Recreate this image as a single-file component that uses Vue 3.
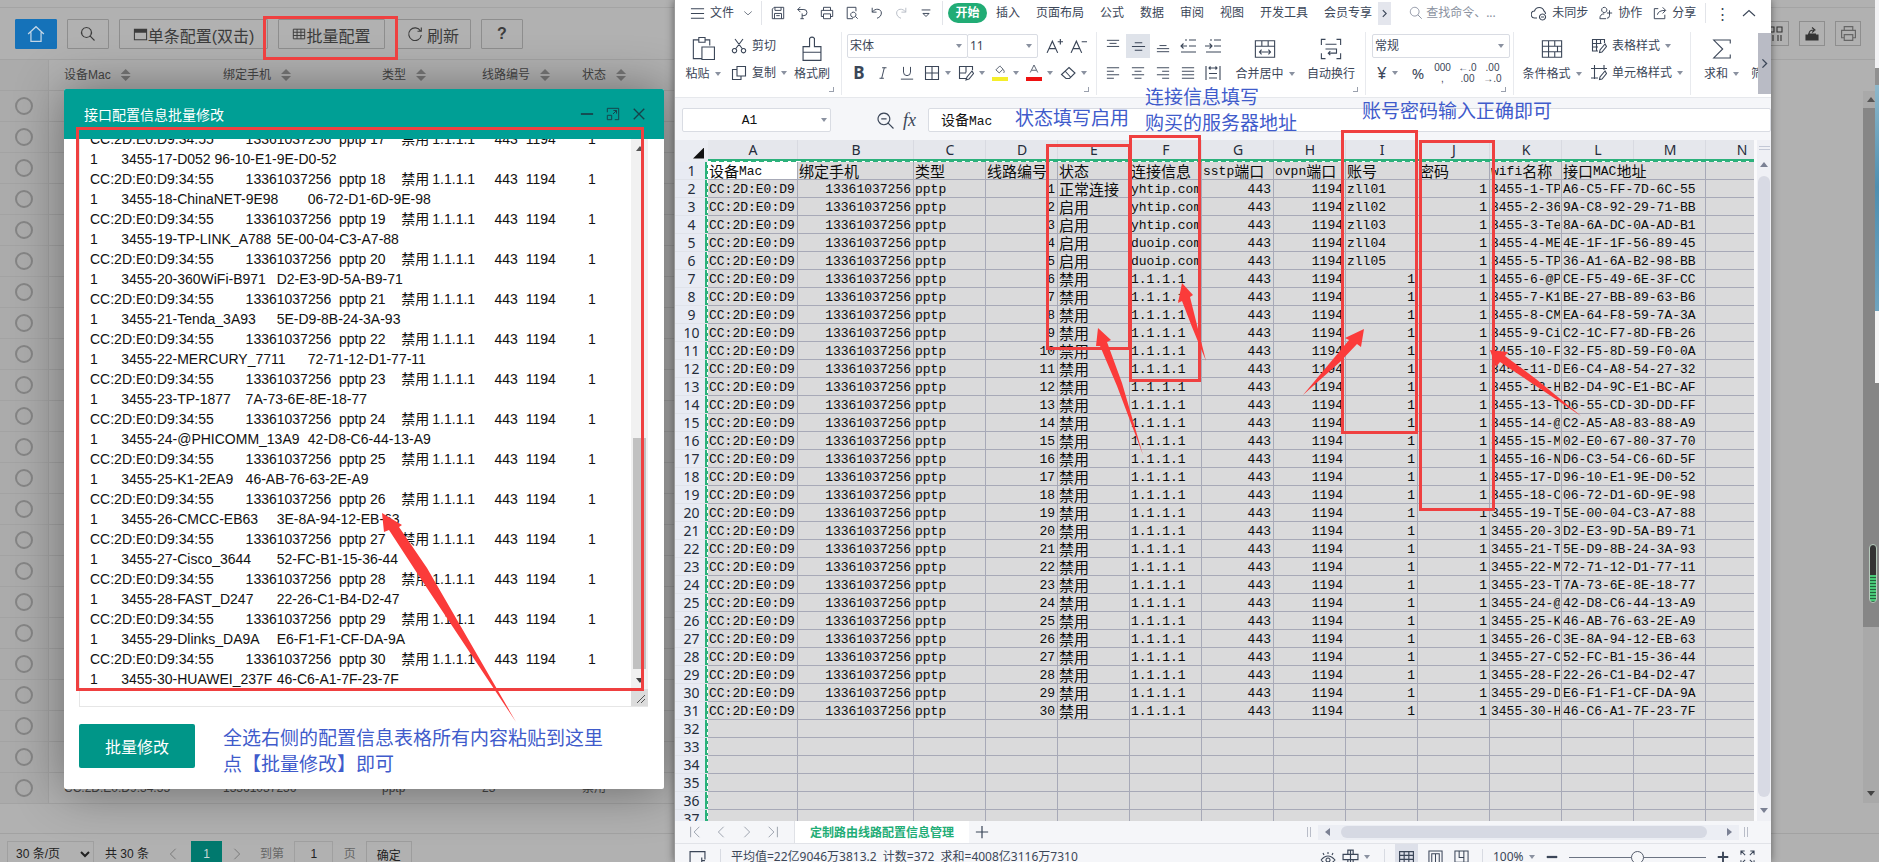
<script setup>
import { h } from 'vue'

const paths = {
  home: 'M1 8 8 1.5 15 8M3.5 6.5V14.5H12.5V6.5',
  search: 'M6.5 1.5a5 5 0 1 0 .01 0M10.2 10.2 14.5 14.5',
  table: 'M1.5 2.5h13v11h-13zM1.5 6h13M1.5 9.7h13M5.8 2.5v11M10.2 2.5v11',
  windowTop: 'M1.5 2.5h13v11h-13zM1.5 3.5h13M1.5 4.5h13M1.5 5.5h13',
  refresh: 'M13.5 5A6.3 6.3 0 1 0 14.3 9M14.3 1.5V5.3H10.5',
  minus: 'M1 8H15',
  maxi: 'M1.5 6V1.5h13v13H10M1.5 9.5h5v5h-5zM8 8l4-4M8.5 4H12V7.5',
  close: 'M2 2 14 14M14 2 2 14',
  burger: 'M1 3H15M1 8H15M1 13H15',
  down: 'M2 5.5 8 11 14 5.5',
  up: 'M2 11 8 5.5 14 11',
  left: 'M11 2 5 8 11 14',
  right: 'M5 2 11 8 5 14',
  first: 'M3 2V14M13 2 7 8 13 14',
  last: 'M13 2V14M3 2 9 8 3 14',
  save: 'M1.5 3.5l2-2h11v13h-13zM4.5 1.5v3.5h7V1.5M4 14.5V8.5h8v6M6 11h4',
  redoArrow: 'M2 4h7a3.5 3.5 0 0 1 0 7H7M5 1 2 4l3 3M7 8.5v6M5 14.5h4',
  print: 'M4 5V1.5h8V5M4 12H1.5V5h13v7H12M4 9h8v5.5H4z',
  preview: 'M9 14.5H2.5V1.5h10V6M9.5 7a3 3 0 1 0 .01 0M12 12l2.5 2.5',
  undo: 'M2.5 2v5h5M2.5 7C6 2 13 3 13 8c0 3-2 5-5 6',
  redo: 'M13.5 2v5h-5M13.5 7C10 2 3 3 3 8c0 3 2 5 5 6',
  moreDown: 'M3 4.5H13M4.5 8.5H11.5L8 12z',
  paste: 'M5 2.5H1.5v12H7M5 1h4v3H5zM9 2.5h3V6M7 7h8v8H7z',
  cut: 'M4 1 11.5 11M12 1 4.5 11M3.5 10.5a2.2 2.2 0 1 0 .01 0M12.5 10.5a2.2 2.2 0 1 0 .01 0',
  copy: 'M6 1.5h8.5v9.5H6zM6 4.5H1.5v10H10V11',
  brush: 'M6.5 6.5V1.5Q8 0 9.5 1.5V6.5H13.5V10H2.5V6.5zM2.5 10v5h11v-5',
  aPlus: 'M1 14 6 3 11 14M3 10H9M11 3.5H16M13.5 1V6',
  aMinus: 'M1 14 6 3 11 14M3 10H9M11 3.5H16',
  italic: 'M7 2H12M4 14H9M9.5 2 6.5 14',
  underline: 'M4 1V7a4 4 0 0 0 8 0V1M1 15H15',
  border: 'M1.5 1.5h13v13h-13zM8 1.5v13M1.5 8h13',
  drawBorder: 'M8 13.5H1.5V1.5h13V5M8 1.5v6M1.5 8H8M14 6l-5 6-1 3 3-1 4.5-5.5z',
  fill: 'M8 1 2.5 6.5 7 10.5 12 5.5 8 1.5M12.5 6q2 3 .5 4.5',
  fontA: 'M3 10 8 0 13 10M5 7H11',
  eraser: 'M9 2.5 15 8 9.5 13.5H6L1.5 9.5zM5 6l5.5 6',
  vTop: 'M1 1.5H15M4 5H12M1 8.5H15',
  vMid: 'M4 4H12M1 8H15M4 12H12',
  vBot: 'M4 7.5H12M1 11H15M1 14.5H15',
  outdent: 'M9 2H16M9 8H16M1 14H16M1 8H7M3.5 5.5 1 8l2.5 2.5M5 2H7',
  indent: 'M9 2H16M9 8H16M1 14H16M0 8H7M4.5 5.5 7 8 4.5 10.5M5 2H7',
  hLeft: 'M1 2H15M1 6H9M1 10H15M1 14H9',
  hCenter: 'M1 2H15M4 6H12M1 10H15M4 14H12',
  hRight: 'M1 2H15M7 6H15M1 10H15M7 14H15',
  hJust: 'M1 2H15M1 6H15M1 10H15M1 14H15',
  hDist: 'M1 1V15M15 1V15M4 3H12M5.5 1.5 4 3l1.5 1.5M10.5 1.5 12 3l-1.5 1.5M4 8.5H12M4 13H12',
  merge: 'M1 2h14v12H1zM1 6h14M5.7 2v4M10.3 2v4M4 10.2H12M5.5 8.5 4 10.2l1.5 1.7M10.5 8.5 12 10.2l-1.5 1.7',
  wrap: 'M4 1H1V5M12 1h3V5M4 15H1V11M12 15h3V11M4 4.5H12M4 8H12V11H6M7.5 9.5 6 11l1.5 1.5',
  condition: 'M1 2h14v12H1zM1 6h14M1 10h14M5.5 2v12M10 2v4M10 10v4M12 6v4',
  tableStyle: 'M7 13H1.5V1.5h12V5M1.5 5.5h9M1.5 9H7M5.5 1.5V13M9.5 1.5V6M14 6l-5 6-.5 2.5 2.5-.5 4.5-5.5z',
  cellStyle: 'M0 3.5H16M3.5 0V14M13 0V5M0 13H7M14 6l-5 6-.5 2.5 2.5-.5 4.5-5.5z',
  sigma: 'M14 4V1.5H2L8.5 8 2 14.5H14V12',
  cloud: 'M6 13H4a3.5 3.5 0 0 1-.5-7A5 5 0 0 1 13 6a3.5 3.5 0 0 1 1.5 3M11.5 9a3 3 0 1 0 .01 0M10 12h3',
  people: 'M6 1.5a3 3 0 1 0 .01 0M1 14.5Q1 9 6 9M1 14.5H8M12 5V11M9 8H15M12 11q0 3-3 3',
  share: 'M6 3H1.5v11.5h12V10M5 10q1-5 9-5M11 1.5 14.5 5 11 8.5',
  zoomOut: 'M6.5 1a5.5 5.5 0 1 0 .01 0M4 6.5H9M10.5 10.5 15.5 15.5',
  plus: 'M8 1V15M1 8H15',
  status: 'M8 12H1V1.5H15V9M12 7v6M10 14h5M12 10h3',
  eye: 'M1 9q7-8 14 0q-7 8-14 0M8 7a2 2 0 1 0 .01 0M8 1V3M3 2l1 2M13 2l-1 2',
  target: 'M8 1V15M1 5h14v5H1zM5.5 5V1h5v4M5.5 10v4h5v-4',
  pageView: 'M1 15V1h14v14M4 15V4h8v11M8 4V15',
  breakView: 'M1 1h14v12H1zM5.5 1v7H10.5V1M10.5 8V13',
  expand: 'M1 5V1h4M1 1l4.5 4.5M11 1h4v4M15 1l-4.5 4.5M1 11v4h4M1 15l4.5-4.5M15 11v4h-4M15 15l-4.5-4.5',
  columns: 'M1 1h5v5H1zM9 1h5v5H9zM2 9v6M5 9v6M10 9v6M13 9v6',
  exportBox: 'M2 9h12v5H2zM2 10h12M2 11h12M2 12h12M2 13h12M5 8q0-4 5-4M8 1.5 11 4 8 6.5M4 8h8'
}
const Icon = (p) =>
  h('svg', { viewBox: '0 0 16 16', width: p.s || 16, height: p.s || 16, fill: 'none', stroke: 'currentColor', 'stroke-width': p.w || 1.1, 'aria-hidden': 'true' }, [
    h('path', { d: paths[p.n] })
  ])
Icon.props = ['n', 's', 'w']

const tail = [
  ['D052', '96-10-E1-9E-D0-52'], ['ChinaNET-9E98', '06-72-D1-6D-9E-98'], ['TP-LINK_A788', '5E-00-04-C3-A7-88'],
  ['360WiFi-B971', 'D2-E3-9D-5A-B9-71'], ['Tenda_3A93', '5E-D9-8B-24-3A-93'], ['MERCURY_7711', '72-71-12-D1-77-11'],
  ['TP-1877', '7A-73-6E-8E-18-77'], ['@PHICOMM_13A9', '42-D8-C6-44-13-A9'], ['K1-2EA9', '46-AB-76-63-2E-A9'],
  ['CMCC-EB63', '3E-8A-94-12-EB-63'], ['Cisco_3644', '52-FC-B1-15-36-44'], ['FAST_D247', '22-26-C1-B4-D2-47'],
  ['Dlinks_DA9A', 'E6-F1-F1-CF-DA-9A'], ['HUAWEI_237F', '46-C6-A1-7F-23-7F']
]
const head = [
  ['TP', 'A6-C5-FF-7D-6C-55'], ['36', '9A-C8-92-29-71-BB'], ['Te', '8A-6A-DC-0A-AD-B1'], ['ME', '4E-1F-1F-56-89-45'],
  ['TP', '36-A1-6A-B2-98-BB'], ['@P', 'CE-F5-49-6E-3F-CC'], ['K1', 'BE-27-BB-89-63-B6'], ['CM', 'EA-64-F8-59-7A-3A'],
  ['Ci', 'C2-1C-F7-8D-FB-26'], ['F', '32-F5-8D-59-F0-0A'], ['D', 'E6-C4-A8-54-27-32'], ['H', 'B2-D4-9C-E1-BC-AF'],
  ['T', 'D6-55-CD-3D-DD-FF'], ['@', 'C2-A5-A8-83-88-A9'], ['M', '02-E0-67-80-37-70'], ['N', 'D6-C3-54-C6-6D-5F']
]
const all = [...head, ...tail]
const areaText = tail
  .map(([name, mac], i) => `CC:2D:E0:D9:34:55\t13361037256\tpptp\t${i + 17}\t禁用\t1.1.1.1\t443\t1194\t1\n1\t3455-${i + 17}-${name}\t${mac}`)
  .join('\n')

const letters = 'ABCDEFGHIJKLMN'.split('')
const right = [1, 3, 6, 7, 8, 9]
const sheet = [['设备Mac', '绑定手机', '类型', '线路编号', '状态', '连接信息', 'sstp端口', 'ovpn端口', '账号', '密码', 'wifi名称', '接口MAC地址']]
all.forEach(([name, mac], i) => {
  const n = i + 1
  sheet.push([
    'CC:2D:E0:D9', '13361037256', 'pptp', String(n), n === 1 ? '正常连接' : n < 6 ? '启用' : '禁用',
    n < 4 ? 'yhtip.com' : n < 6 ? 'duoip.com' : '1.1.1.1', '443', '1194', n < 6 ? 'zll0' + n : '1', '1',
    `3455-${n}-${name}`.slice(0, 9), mac
  ])
})
const isRight = (r, c, v) => r > 0 && right.includes(c) && !v.startsWith('zll')
const runs = (v) => v.match(/[\x00-\x7f]+|[^\x00-\x7f]+/g).map((t) => ({ t, latin: t.charCodeAt(0) < 128 }))

const tabs = ['插入', '页面布局', '公式', '数据', '审阅', '视图', '开发工具', '会员专享']
const heads = ['设备Mac', '绑定手机', '类型', '线路编号', '状态']
const lastRow = ['CC:2D:E0:D9:34:55', '13361037256', 'pptp', '23', '禁用']
const quick = [['save', '保存'], ['redoArrow', '输出'], ['print', '打印'], ['preview', '打印预览'], ['undo', '撤销'], ['redo', '恢复'], ['moreDown', '更多']]
</script>

<template>
  <div class="desktop">
    <section class="admin">
      <div class="strip"></div>
      <div class="tools">
        <button class="tb home" aria-label="首页"><Icon n="home" s="18" /></button>
        <button class="tb" aria-label="搜索"><Icon n="search" /></button>
        <button class="tb wide"><Icon n="windowTop" s="15" /><span>单条配置(双击)</span></button>
        <button class="tb batch"><Icon n="table" s="14" /><span>批量配置</span></button>
        <button class="tb reload"><Icon n="refresh" /><span>刷新</span></button>
        <button class="tb q">?</button>
        <div class="tools-right">
          <button aria-label="筛选列"><Icon n="columns" /></button>
          <button aria-label="导出"><Icon n="exportBox" /></button>
          <button class="pr" aria-label="打印"><Icon n="print" s="17" /></button>
        </div>
      </div>
      <div class="main">
        <table class="list">
          <colgroup><col class="w0" /><col class="w1" /><col class="w2" /><col class="w3" /><col class="w4" /><col class="w5" /></colgroup>
          <thead>
            <tr><th></th><th v-for="t in heads" :key="t">{{ t }}<i class="sort"></i></th></tr>
          </thead>
          <tbody>
            <tr v-for="n in 23" :key="n">
              <td class="pick"><input type="radio" name="line" :aria-label="'选择第' + n + '行'" /></td>
              <template v-if="n === 23"><td v-for="t in lastRow" :key="t">{{ t }}</td></template>
              <td v-else colspan="5"></td>
            </tr>
          </tbody>
        </table>
        <div class="page-scroll"><i class="tri up"></i><div class="page-thumb"></div><i class="tri dn"></i></div>
      </div>
      <div class="spacer"></div>
      <div class="pager">
        <select aria-label="每页条数"><option>30 条/页</option></select>
        <span class="total">共 30 条</span>
        <button class="pg" aria-label="上一页"><Icon n="left" s="14" /></button>
        <button class="cur">1</button>
        <button class="pg" aria-label="下一页"><Icon n="right" s="14" /></button>
        <label class="goto">到第 <input type="text" value="1" /> 页</label>
        <button class="ok">确定</button>
      </div>
    </section>

    <section class="modal">
      <header>
        <h1>接口配置信息批量修改</h1>
        <button aria-label="最小化"><Icon n="minus" w="2" s="14" /></button>
        <button aria-label="最大化"><Icon n="maxi" s="14" /></button>
        <button aria-label="关闭"><Icon n="close" w="1.6" s="14" /></button>
      </header>
      <div class="mbody">
        <div class="area">
          <textarea :value="areaText" aria-label="配置信息" wrap="off" spellcheck="false"></textarea>
          <div class="ascroll">
            <i class="tri up"></i><div class="athumb"></div><i class="tri dn"></i>
            <svg class="grip" viewBox="0 0 17 17"><path d="M6 14 14 6M10 14l4-4" /></svg>
          </div>
        </div>
        <div class="mfoot">
          <button>批量修改</button>
          <p class="note">全选右侧的配置信息表格所有内容粘贴到这里<br />点【批量修改】即可</p>
        </div>
      </div>
    </section>

    <section class="wps">
      <nav class="menu">
        <button class="file"><Icon n="burger" s="15" /><span>文件</span><Icon n="down" s="10" /></button>
        <div class="quick"><button v-for="q in quick" :key="q[0]" :aria-label="q[1]" :class="q[0]"><Icon :n="q[0]" s="14" /></button></div>
        <button class="start">开始</button>
        <div class="tabs"><button v-for="t in tabs" :key="t">{{ t }}</button></div>
        <button class="more" aria-label="更多选项卡"><Icon n="right" s="9" w="2" /></button>
        <label class="find"><Icon n="search" s="14" /><input type="text" placeholder="查找命令、..." aria-label="查找命令" /></label>
        <button class="act a1"><Icon n="cloud" />未同步</button>
        <button class="act a2"><Icon n="people" s="14" />协作</button>
        <button class="act a3"><Icon n="share" s="14" />分享</button>
        <button class="dots" aria-label="更多">⋮</button>
        <button class="fold" aria-label="折叠功能区"><Icon n="up" /></button>
      </nav>

      <div class="ribbon">
        <div class="group g1">
          <button class="big paste"><Icon n="paste" s="25" w=".7" /><span>粘贴<i class="caret"></i></span></button>
          <div class="rows">
            <button class="sm"><Icon n="cut" />剪切</button>
            <button class="sm"><Icon n="copy" />复制<i class="caret"></i></button>
          </div>
          <button class="big fmt"><Icon n="brush" s="26" w=".7" /><span>格式刷</span></button>
          <i class="corner"></i>
        </div>
        <div class="group g2">
          <div class="rows">
            <div class="line">
              <div class="combo font"><select aria-label="字体"><option>宋体</option></select><i class="caret"></i></div>
              <div class="combo size"><select aria-label="字号"><option>11</option></select><i class="caret"></i></div>
              <button class="ib a" aria-label="增大字号"><Icon n="aPlus" s="17" /></button>
              <button class="ib" aria-label="减小字号"><Icon n="aMinus" s="17" /></button>
            </div>
            <div class="line second">
              <button class="ib bold">B</button>
              <button class="ib" aria-label="斜体"><Icon n="italic" s="14" /></button>
              <button class="ib ul" aria-label="下划线"><Icon n="underline" s="14" /></button>
              <button class="dd" aria-label="边框"><Icon n="border" /><i class="caret"></i></button>
              <button class="dd" aria-label="绘制边框"><Icon n="drawBorder" /><i class="caret"></i></button>
              <button class="dd yellow" aria-label="填充颜色"><Icon n="fill" /><i class="caret"></i></button>
              <button class="dd red" aria-label="字体颜色"><Icon n="fontA" /><i class="caret"></i></button>
              <button class="dd" aria-label="清除"><Icon n="eraser" /><i class="caret"></i></button>
            </div>
          </div>
          <i class="corner"></i>
        </div>
        <div class="group g3">
          <div class="rows">
            <div class="line al">
              <button class="ib" aria-label="顶端对齐"><Icon n="vTop" s="14" /></button>
              <button class="ib on" aria-label="垂直居中"><Icon n="vMid" s="15" /></button>
              <button class="ib" aria-label="底端对齐"><Icon n="vBot" s="14" /></button>
              <button class="ib" aria-label="减少缩进"><Icon n="outdent" /></button>
              <button class="ib" aria-label="增加缩进"><Icon n="indent" /></button>
            </div>
            <div class="line al second">
              <button class="ib" aria-label="左对齐"><Icon n="hLeft" s="14" /></button>
              <button class="ib" aria-label="水平居中"><Icon n="hCenter" s="14" /></button>
              <button class="ib" aria-label="右对齐"><Icon n="hRight" s="14" /></button>
              <button class="ib" aria-label="两端对齐"><Icon n="hJust" s="14" /></button>
              <button class="ib" aria-label="分散对齐"><Icon n="hDist" /></button>
            </div>
          </div>
          <button class="big mg"><Icon n="merge" s="22" w=".8" /><span>合并居中<i class="caret"></i></span></button>
          <button class="big wr"><Icon n="wrap" s="22" w=".8" /><span>自动换行</span></button>
          <i class="corner"></i>
        </div>
        <div class="group g4">
          <div class="rows">
            <div class="combo num"><select aria-label="数字格式"><option>常规</option></select><i class="caret"></i></div>
            <div class="line second">
              <button class="dd yen">¥<i class="caret"></i></button>
              <button class="ib pct">%</button>
              <button class="ib tiny"><span>000</span><span>,</span></button>
              <button class="ib tiny"><span>←.0</span><span>.00</span></button>
              <button class="ib tiny"><span>.00</span><span>→.0</span></button>
            </div>
          </div>
          <i class="corner"></i>
        </div>
        <div class="group g5">
          <button class="big cd"><Icon n="condition" s="22" w=".8" /><span>条件格式<i class="caret"></i></span></button>
          <div class="rows">
            <button class="sm"><Icon n="tableStyle" />表格样式<i class="caret"></i></button>
            <button class="sm"><Icon n="cellStyle" />单元格样式<i class="caret"></i></button>
          </div>
        </div>
        <div class="group g6">
          <button class="big"><Icon n="sigma" s="22" w=".8" /><span>求和<i class="caret"></i></span></button>
          <button class="big cutoff"><span>筛</span></button>
        </div>
        <button class="slide" aria-label="向右滚动"><Icon n="right" s="11" w="2" /></button>
      </div>

      <div class="formula">
        <div class="namebox"><input type="text" value="A1" aria-label="名称框" /><i class="caret"></i></div>
        <button aria-label="缩小" class="zo"><Icon n="zoomOut" s="17" w="1.1" /></button>
        <em>fx</em>
        <div class="fbar" role="textbox" aria-label="编辑栏">设备<span class="lat">Mac</span></div>
      </div>

      <div class="grid">
        <div class="cells">
          <table>
            <colgroup><col class="rh" /><col class="ca" /><col class="cb" /><col v-for="n in 12" :key="n" class="cn" /></colgroup>
            <thead>
              <tr><th class="all"><i></i></th><th v-for="l in letters" :key="l">{{ l }}</th></tr>
            </thead>
            <tbody>
              <tr v-for="r in 37" :key="r">
                <th>{{ r }}</th>
                <template v-if="r <= 31">
                  <td v-for="(v, c) in sheet[r - 1]" :key="c" :colspan="c === 11 ? 2 : 1" :class="{ r: isRight(r - 1, c, v), active: r === 1 && c === 0 }">
                    <div><span v-for="(p, k) in runs(v)" :key="k" :class="{ lat: p.latin }">{{ p.t }}</span></div>
                  </td>
                  <td></td>
                </template>
                <template v-else><td v-for="l in letters" :key="l"></td></template>
              </tr>
            </tbody>
          </table>
        </div>
        <div class="vscroll"><i class="split"></i><i class="tri up"></i><div class="vthumb"></div><i class="tri dn"></i></div>
      </div>

      <div class="sheets">
        <button v-for="n in ['first', 'left', 'right', 'last']" :key="n" class="nav" :aria-label="n"><Icon :n="n" s="14" /></button>
        <button class="tab">定制路由线路配置信息管理</button>
        <button class="add" aria-label="新建工作表"><Icon n="plus" s="14" w="1.4" /></button>
        <i class="bars"></i>
        <div class="hscroll"><i class="tri lf"></i><div class="hthumb"></div><i class="tri rt"></i></div>
        <i class="bars"></i>
      </div>

      <footer class="status">
        <Icon n="status" s="17" />
        <i class="vr"></i>
        <span class="stat">平均值=22亿9046万3813.2&nbsp; 计数=372&nbsp; 求和=4008亿3116万7310</span>
        <button class="eye" aria-label="护眼模式"><Icon n="eye" /></button>
        <button class="tg" aria-label="阅读模式"><Icon n="target" s="17" /><i class="caret"></i></button>
        <i class="vr"></i>
        <button class="view on" aria-label="普通视图"><Icon n="table" s="17" /></button>
        <button class="view" aria-label="页面布局"><Icon n="pageView" s="15" /></button>
        <button class="view" aria-label="分页预览"><Icon n="breakView" s="15" /></button>
        <i class="vr v2"></i>
        <span class="pc">100%<i class="caret"></i></span>
        <button class="zb" aria-label="缩小"><Icon n="minus" s="12" w="3" /></button>
        <input class="zoom" type="range" min="0" max="100" value="50" aria-label="缩放" />
        <button class="zb" aria-label="放大"><Icon n="plus" s="12" w="2.5" /></button>
        <button class="full" aria-label="全屏"><Icon n="expand" s="15" /></button>
      </footer>
    </section>

    <div class="edge"><i class="e1"></i><i class="e2"></i><i class="e3"></i></div>
    <div class="meter"></div>

    <svg class="marks" aria-hidden="true">
      <g fill="none" stroke="#ef4040" stroke-width="3">
        <rect x="264.5" y="17.5" width="132" height="41" />
        <rect x="77.5" y="128.5" width="565" height="561" />
        <rect x="1047.5" y="145.5" width="82" height="203" />
        <rect x="1130.5" y="136.5" width="69" height="244" />
        <rect x="1342.5" y="131.5" width="74" height="301" />
        <rect x="1420.5" y="141.5" width="73" height="368" />
      </g>
      <g fill="#fb3b3a">
        <path d="M382 513 402 525 399 527 427 568 516 722 417 573 389 530 384 532z" />
        <path d="M1098 328 1111 340 1107 342 1122 383 1143 455 1117 386 1100 346 1096 346z" />
        <path d="M1182 283 1193 295 1190 297 1197 325 1206 361 1192 327 1182 301 1178 303z" />
        <path d="M1364 329 1361 347 1357 344 1340 362 1303 395 1334 358 1349 340 1345 338z" />
        <path d="M1490 350 1508 352 1505 356 1536 379 1581 416 1533 384 1500 362 1496 367z" />
      </g>
    </svg>
    <p class="note n1">状态填写启用</p>
    <p class="note n2">连接信息填写<br />购买的服务器地址</p>
    <p class="note n3">账号密码输入正确即可</p>
  </div>
</template>

<style>
html, body { margin: 0; overflow: hidden; }
</style>

<style scoped>
.desktop { position: relative; height: 100vh; overflow: hidden; background: #b1b1b1; font: 12px "Liberation Sans", "Noto Sans CJK SC", sans-serif; color: #333; }
.desktop *, .desktop { box-sizing: border-box; }
button { font: inherit; color: inherit; background: none; border: 0; padding: 0; margin: 0; display: flex; align-items: center; justify-content: center; flex: none; white-space: nowrap; }
input, select, textarea { font: inherit; color: inherit; margin: 0; border: 0; padding: 0; background: none; outline: 0; }
svg { flex: none; display: block; }
p { margin: 0; }
.tri { width: 0; height: 0; border: 4px solid transparent; flex: none; }
.tri.up { border-bottom: 5px solid #555; border-top: 0; }
.tri.dn { border-top: 5px solid #444; border-bottom: 0; }
.tri.lf { border-right: 5px solid #7b8194; border-left: 0; }
.tri.rt { border-left: 5px solid #7b8194; border-right: 0; }

/* admin page */
.admin { height: 100%; display: flex; flex-direction: column; }
.strip { height: 8px; border-bottom: 1px solid #a4a4a4; flex: none; }
.tools { height: 52px; flex: none; border-bottom: 1px solid #a3a3a3; display: flex; gap: 10px; padding: 11px 18px 0 15px; }
.tb { width: 42px; height: 30px; border: 1px solid #8e8e8e; font-size: 16px; line-height: 24px; color: #3c3c3c; border-radius: 1px; }
.tb.home { background: #1572b9; border-color: #1572b9; color: #c3d6e6; }
.tb.wide { width: 149px; }
.tb.batch { width: 107px; }
.tb.reload { width: 76px; }
.tb span { padding-top: 6px; }
.reload span { margin-left: 4px; }
.tb.q { font-weight: bold; }
.tools-right { margin-left: auto; display: flex; gap: 10px; padding-top: 2px; }
.tools-right button { width: 26px; height: 25px; border: 1px solid #8e8e8e; color: #333; }
.tools-right .pr { color: #666; }
.main { height: 743px; flex: none; display: flex; justify-content: space-between; }
.list { width: 675px; table-layout: fixed; border-collapse: separate; border-spacing: 0; color: #444; align-self: flex-start; }
.w0 { width: 49px; } .w1 { width: 159px; } .w2 { width: 159px; } .w3 { width: 100px; } .w4 { width: 100px; } .w5 { width: 108px; }
.list th, .list td { height: 31px; padding: 0 0 0 15px; text-align: left; font-weight: normal; border-bottom: 1px solid #a3a3a3; line-height: 18px; white-space: nowrap; }
.list td:first-child, .list th:first-child { border-right: 1px solid #a3a3a3; padding: 0; text-align: center; background: #ababab; }
.pick input { appearance: none; width: 18px; height: 18px; border: 2px solid #858585; border-radius: 50%; vertical-align: middle; }
.sort { display: inline-block; width: 10px; height: 12px; margin-left: 10px; vertical-align: -2px; background: #777; clip-path: polygon(50% 0, 100% 42%, 0 42%, 0 58%, 100% 58%, 50% 100%, 0 58%, 0 42%); }
.page-scroll { width: 16px; margin-top: 31px; background: #a9a9a9; display: flex; flex-direction: column; align-items: center; padding: 6px 0 7px; }
.page-thumb { width: 100%; height: 519px; flex: none; background: #868686; margin: 6px 0 auto; }
.spacer { height: 30px; flex: none; }
.pager { border-top: 1px solid #a2a2a2; padding: 7px 0 0 7px; display: flex; flex: 1; height: 28px; color: #222; }
.pager select { width: 87px; height: 26px; border: 1px solid #a0a0a0; padding-left: 4px; }
.total { line-height: 26px; width: 53px; margin-left: 11px; }
.pg { width: 30px; height: 26px; color: #777; }
.cur { width: 31px; height: 26px; background: #00796e; color: #c7d8d6; margin-left: 3px; }
.goto { color: #666; margin-left: 8px; line-height: 26px; }
.goto input { width: 39px; height: 26px; border: 1px solid #a0a0a0; text-align: center; color: #222; margin: 0 7px; }
.ok { width: 46px; height: 26px; border: 1px solid #9d9d9d; margin-left: 10px; }

/* dialog */
.modal { position: absolute; left: 64px; top: 89px; width: 600px; background: #fff; border-radius: 2px; box-shadow: 1px 1px 50px rgba(0, 0, 0, .42); }
.modal header { height: 50px; background: #009f95; display: flex; align-items: center; padding: 0 18px 0 20px; gap: 12px; color: #17424a; border-radius: 2px 2px 0 0; }
.modal h1 { margin: 0 auto 0 0; font-size: 14px; font-weight: normal; color: #fff; }
.mbody { overflow: hidden; padding: 0 16px 20px 15px; }
.area { display: flex; height: 568px; border: solid #e6e6e6; border-width: 0 0 1px 1px; overflow: hidden; }
textarea { flex: 1; resize: none; overflow: hidden; height: 580px; margin-top: -10px; padding-left: 10px; font-size: 14px; line-height: 20px; color: #111; tab-size: 8; white-space: pre; }
.ascroll { width: 17px; background: #f1f1f1; display: flex; flex-direction: column; align-items: center; padding-top: 7px; }
.athumb { width: 13px; height: 231px; background: #c1c1c1; margin: 287px 0 9px; }
.grip { width: 17px; height: 17px; margin-top: auto; background: #dcdcdc; stroke: #555; }
.mfoot { display: flex; align-items: flex-start; padding-top: 17px; }
.mfoot button { width: 116px; height: 44px; background: #009688; color: #fff; font-size: 16px; border-radius: 2px; }
.mfoot .note { margin-left: 28px; height: 45px; }
.note { font: 19px/26px "Noto Sans CJK SC", sans-serif; color: #3f5bcb; white-space: nowrap; }

/* spreadsheet window */
.wps { position: absolute; left: 674px; right: 108px; top: 0; bottom: 0; background: #fff; overflow: hidden; display: flex; flex-direction: column; font-family: "Noto Sans", "Noto Sans CJK SC", sans-serif; color: #3b4658; border-left: 1px solid #999; box-shadow: 0 0 8px rgba(0, 0, 0, .45); }
.caret { display: inline-block; width: 0; height: 0; border: 3px solid transparent; border-top: 4px solid #8a91a0; border-bottom: 0; margin-left: 5px; vertical-align: 2px; flex: none; }
.menu { height: 26px; flex: none; display: flex; align-items: center; line-height: 18px; }
.file { width: 87px; height: 24px; border-right: 1px solid #e2e4e9; justify-content: flex-start; padding-left: 15px; gap: 5px; }
.file span { margin-right: 4px; }
.quick { width: 181px; height: 24px; border-right: 1px solid #e2e4e9; display: flex; align-items: center; justify-content: space-between; padding: 0 9px; }
.quick .redo { color: #b8bdc7; }
.start { width: 39px; height: 20px; margin-left: 5px; background: #21ac75; color: #fff; border-radius: 10px; font-weight: bold; }
.tabs { display: flex; gap: 16px; margin-left: 9px; }
.more { width: 13px; height: 23px; background: #e4e6ed; margin-left: 6px; }
.find { display: flex; align-items: center; gap: 3px; margin-left: 18px; color: #8a91a0; width: 122px; }
.find input { width: 80px; }
.find input::placeholder { color: #8a91a0; opacity: 1; }
.act { gap: 5px; }
.a2 { margin-left: 11px; } .a3 { margin-left: 11px; }
.dots { width: 34px; height: 20px; margin-left: 9px; border-left: 1px solid #e2e4e9; font-size: 15px; }
.fold { margin-left: auto; margin-right: 14px; }
.ribbon { height: 71px; flex: none; display: flex; }
.group { position: relative; height: 63px; margin-top: 6px; border-right: 1px solid #e8eaee; display: flex; flex: none; line-height: 18px; padding-top: 2px; }
.g1 { width: 167px; } .g2 { width: 255px; padding-left: 5px; } .g3 { width: 269px; padding-left: 4px; } .g4 { width: 148px; padding-left: 6px; } .g5 { width: 177px; } .g6 { flex: 1; border: 0; overflow: hidden; }
.rows { display: flex; flex-direction: column; gap: 4px; }
.line { display: flex; height: 24px; }
.line.al { gap: 1px; }
.corner { position: absolute; right: 7px; bottom: 3px; width: 5px; height: 5px; border: solid #9aa0ad; border-width: 0 1px 1px 0; }
.big { flex-direction: column; justify-content: space-between; height: 49px; }
.big svg { margin-top: 4px; }
.paste { width: 56px; }
.paste svg, .fmt svg { margin-top: 2px; }
.sm { height: 23px; gap: 5px; justify-content: flex-start; }
.sm .caret { margin-left: 0; }
.fmt { margin-left: 7px; }
.combo { position: relative; display: flex; align-items: center; height: 24px; border: 1px solid #d9dce3; border-radius: 2px; padding-right: 5px; }
.combo select { appearance: none; flex: 1; width: 20px; padding-left: 2px; height: 20px; }
.font { width: 121px; } .size { width: 71px; margin-left: -1px; } .num { width: 138px; }
.ib { width: 24px; height: 24px; }
.ib.a { margin-left: 4px; }
.ib.on { background: #dfe3ea; }
.second .ib, .dd { height: 22px; }
.bold { font-size: 17px; font-weight: bold; }
.dd { width: 34px; justify-content: flex-start; }
.ul { margin-right: 4px; }
.dd svg { margin-left: 1px; }
.yellow svg { border-bottom: 4px solid #f5ee2a; }
.red svg { border-bottom: 4px solid #e11; }
.yen { font-size: 17px; padding-left: 5px; }
.pct { font-size: 15px; }
.ib.tiny { flex-direction: column; font: 10px/11px "Liberation Sans", sans-serif; width: 25px; }
.mg { width: 62px; margin-left: 9px; } .wr { width: 52px; margin-left: 9px; }
.cd { width: 62px; margin: 0 8px 0 7px; }
.g6 .big { margin-left: 13px; }
.g6 .cutoff { margin-left: 12px; justify-content: flex-end; }
.slide { width: 13px; height: 61px; margin-top: 7px; background: #b9bbc5; }
.formula { height: 43px; flex: none; background: #f5f6f9; border-top: 1px solid #e6e8ec; display: flex; align-items: center; padding: 2px 0 0 7px; }
.namebox { width: 149px; height: 24px; border: 1px solid #d9dce3; background: #fff; display: flex; align-items: center; padding-right: 3px; border-radius: 2px; }
.namebox input { flex: 1; width: 30px; text-align: center; font: 13px "Liberation Mono", monospace; color: #111; }
.zo { margin-left: 46px; }
.formula em { font: italic 18px/20px "Liberation Serif", serif; margin-left: 9px; width: 25px; }
.fbar { flex: 1; height: 24px; border: 1px solid #d9dce3; background: #fff; padding-left: 12px; font-size: 14px; line-height: 21px; color: #111; border-radius: 2px; white-space: nowrap; }
.lat { font-family: "Liberation Mono", monospace; font-size: 13px; }
.grid { flex: 1; min-height: 0; display: flex; }
.cells { flex: 1; min-width: 0; overflow: hidden; background: #dadadb; }
.cells table { width: 1103px; table-layout: fixed; border-collapse: separate; border-spacing: 0; }
.rh { width: 33px; } .ca { width: 90px; } .cb { width: 116px; } .cn { width: 72px; }
.cells th { font: 14px/17px "Noto Sans", sans-serif; color: #252d3b; padding: 0; }
.cells thead th { height: 22px; line-height: 19px; padding-bottom: 3px; background: repeating-linear-gradient(90deg, #fff 0 3px, #2bb17b 3px 8px) bottom / 100% 1px no-repeat, linear-gradient(#2bb17b, #2bb17b) bottom / 100% 3px no-repeat, linear-gradient(#d8dae1, #d8dae1) right / 1px 100% no-repeat, #e5e7ec; }
.cells thead .all { background: #eaecf2; padding: 0; }
.all i { display: block; margin: 4px 0 0 18px; width: 11px; height: 11px; background: #111; clip-path: polygon(100% 0, 100% 100%, 0 100%); }
.cells tbody th { height: 18px; border-bottom: 1px solid #e0e3ea; background: repeating-linear-gradient(#fff 0 3px, #2bb17b 3px 6px) right / 1px 100% no-repeat, linear-gradient(#2bb17b, #2bb17b) right / 3px 100% no-repeat, #e8ebf3; background-origin: border-box; }
.cells td { height: 18px; padding: 0 1px; border: solid #a7a9b7; border-width: 0 1px 1px 0; color: #0c0c0c; }
.cells td.active { background: #fff; }
.cells td div { height: 17px; display: flex; align-items: center; overflow: hidden; white-space: nowrap; font: 15px/17px "Noto Sans CJK SC", sans-serif; }
.cells td div span { line-height: 17px; }
.cells td div .lat { font: 13px/14px "Liberation Mono", monospace; padding-top: 3px; }
.cells td.r { padding-right: 2px; }
.cells td.r div { justify-content: flex-end; }
.vscroll { width: 17px; flex: none; border-left: 3px solid #fafafc; background: #eff0f5; display: flex; flex-direction: column; align-items: center; }
.split { width: 11px; height: 4px; border: solid #c3c8d6; border-width: 1px 0; margin: 6px 0 12px; flex: none; }
.vthumb { width: 12px; flex: 1; margin: 9px 0 11px; border-radius: 6px; background: #d8dae4; }
.vscroll .dn { margin-bottom: 8px; border-top-color: #7b8194; }
.vscroll .up { border-bottom-color: #7b8194; }
.sheets { height: 22px; flex: none; background: #f5f6f9; display: flex; align-items: center; padding-left: 13px; }
.nav { width: 26px; color: #9ba1ad; justify-content: flex-start; }
.tab { width: 175px; height: 22px; margin-left: 2px; background: #fff; border-left: 1px solid #dfe1e6; color: #22ad76; font-weight: bold; }
.add { margin: 0 auto 0 6px; }
.bars { width: 4px; height: 10px; border: solid #b9bdc8; border-width: 0 1px; flex: none; }
.hscroll { width: 421px; height: 15px; margin: 0 5px 0 7px; background: #eceef4; display: flex; align-items: center; padding: 0 7px; }
.hthumb { flex: 1; height: 12px; margin: 0 20px 0 11px; border-radius: 6px; background: #d6d9e3; }
.sheets > .bars:last-child { margin-right: 23px; }
.status { height: 19px; flex: none; overflow: hidden; border-top: 1px solid #e1e3e8; background: #f5f6f9; display: flex; padding-left: 14px; align-items: flex-start; }
.status > svg { margin-top: 6px; }
.status button { height: 26px; }
.vr { width: 1px; height: 16px; background: #d8dbe2; margin: 5px 10px 0 14px; flex: none; }
.stat { line-height: 26px; margin-right: auto; white-space: nowrap; }
.tg { margin-left: 6px; }
.eye svg { margin-top: 3px; }
.view { width: 26px; }
.view.on { background: #dde0e9; width: 23px; margin-right: 4px; }
.vr.v2 { margin-left: 8px; }
.pc { line-height: 26px; width: 53px; white-space: nowrap; }
.zoom { appearance: none; width: 137px; height: 26px; margin: 0 11px; background: linear-gradient(#6c7483, #6c7483) center / 100% 1px no-repeat; }
.zoom::-webkit-slider-thumb { appearance: none; width: 13px; height: 13px; border: 1px solid #555d6c; border-radius: 50%; background: #f7f8fa; }
.full { margin: 0 16px 0 11px; }

/* items above the windows */
.edge { position: absolute; right: 0; top: 0; width: 4px; }
.edge i { display: block; }
.e1 { height: 85px; background: linear-gradient(#f2f2f4 68px, #909090 68px); }
.e2 { height: 226px; background: linear-gradient(#8eb9cc, #4f8fb0 45%, #6fa4bf); }
.e3 { height: 72px; background: #f5f5f5; }
.meter { position: absolute; right: 2px; top: 544px; width: 8px; height: 59px; border: 1px solid #b5c9bb; border-radius: 4px; background: linear-gradient(#333 30px, transparent 30px), repeating-linear-gradient(#48c877 0 2px, #24613b 2px 3px); }
.marks { position: absolute; left: 0; top: 0; width: 100%; height: 100%; pointer-events: none; }
.n1, .n2, .n3 { position: absolute; }
.n1 { left: 1015px; top: 104px; }
.n2 { left: 1145px; top: 83px; }
.n3 { left: 1362px; top: 97px; }
</style>
